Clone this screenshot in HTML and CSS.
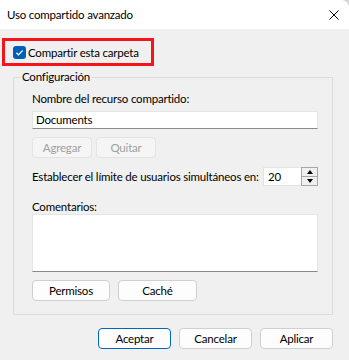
FILE: index.html
```html
<!DOCTYPE html>
<html lang="es">
<head>
<meta charset="utf-8">
<title>Uso compartido avanzado</title>
<link rel="stylesheet" href="styles.css">
</head>
<body>
<div class="titlebar">
  <span class="title">Uso compartido avanzado</span>
  <svg class="close" width="10" height="10" viewBox="0 0 10 10"><path d="M0.5 0.5 9.5 9.5M9.5 0.5 0.5 9.5" stroke="#000" stroke-width="1" fill="none"/></svg>
</div>
<div class="share">
  <svg class="check" width="13" height="13" viewBox="0 0 13 13"><rect width="13" height="13" rx="3" fill="#005fb8"/><path d="M3.4 6.8 5.5 8.8 9.6 4.5" fill="none" stroke="#fff" stroke-width="1.2"/></svg>
  <span>Compartir esta carpeta</span>
</div>
<fieldset class="group">
  <legend>Configuración</legend>
  <div class="group-body">
    <div class="label">Nombre del recurso compartido:</div>
    <div class="input">Documents</div>
    <div class="btn-row">
      <button class="btn w60" disabled>Agregar</button>
      <button class="btn w60" disabled>Quitar</button>
    </div>
    <div class="limit-row">
      <span>Establecer el límite de usuarios simultáneos en:</span>
      <div class="spin">
        <span class="spin-value">20</span>
        <span class="spin-btns">
          <span class="sb sb-up"><span class="tri-up"></span></span>
          <span class="sb"><span class="tri-down"></span></span>
        </span>
      </div>
    </div>
    <div class="label comments">Comentarios:</div>
    <div class="textarea"></div>
    <div class="btn-row gap8">
      <button class="btn w78">Permisos</button>
      <button class="btn w79">Caché</button>
    </div>
  </div>
</fieldset>
<div class="footer">
  <button class="btn fbtn default">Aceptar</button>
  <button class="btn fbtn">Cancelar</button>
  <button class="btn fbtn">Aplicar</button>
</div>
</body>
</html>
```
FILE: styles.css
```css
* { box-sizing: border-box; }
html { background: #d4d4d4; }
body {
  margin: 0;
  width: 349px;
  height: 360px;
  background: #f0f0f0;
  font-family: Lato, Roboto, "Noto Sans", sans-serif;
  font-size: 11.5px;
  letter-spacing: -0.2px;
  color: #000;
  border-top-right-radius: 8px;
  overflow: hidden;
  white-space: nowrap;
}
.titlebar {
  height: 29px;
  background: #fff;
  display: flex;
  align-items: center;
  padding-left: 7px;
}
.title { flex: 1; line-height: 16px; padding-top: 1px; }
.close { margin-right: 10px; }
.share {
  display: flex;
  align-items: center;
  gap: 2px;
  width: 152px;
  height: 28px;
  margin: 9px 0 0 2px;
  border: 3px solid #f5141a;
  padding-left: 8px;
}
.check { flex: none; }
.group {
  margin: 3px 16px 0 13px;
  padding: 0;
  border: 1px solid #dcdcdc;
  min-width: 0;
}
.group legend { margin-left: 6px; padding: 0 2px; line-height: 16px; }
.group-body { padding: 6px 14px 13px 18px; }
.label { line-height: 16px; }
.input {
  margin-top: 4px;
  height: 18px;
  background: #fff;
  border: 1px solid #e5e5e5;
  border-bottom-color: #8a8a8a;
  padding-left: 3px;
  line-height: 16px;
}
.btn-row { display: flex; gap: 4px; margin-top: 8px; }
.btn-row.gap8 { gap: 8px; }
.btn {
  font: inherit;
  letter-spacing: inherit;
  height: 21px;
  background: #fdfdfd;
  border: 1px solid #d0d0d0;
  border-radius: 4px;
  padding: 0;
  color: #000;
}
.btn:disabled { color: #a0a0a0; border-color: #e3e3e3; background: #f5f5f5; }
.w60 { width: 60px; }
.w78 { width: 78px; }
.w79 { width: 79px; }
.limit-row { display: flex; align-items: center; justify-content: space-between; margin-top: 9px; height: 19px; }
.spin {
  display: flex;
  width: 55px;
  height: 19px;
  background: #fff;
  border: 1px solid #e3e3e3;
}
.spin-value { flex: 1; padding-left: 4px; line-height: 17px; }
.spin-btns {
  width: 17px;
  display: flex;
  flex-direction: column;
  border: 1px solid #a8a8a8;
  margin: -1px -1px -1px 0;
}
.sb { flex: 1; display: flex; align-items: center; justify-content: center; background: #f0f0f0; }
.sb-up { border-bottom: 1px solid #a8a8a8; }
.tri-up { border-left: 3.5px solid transparent; border-right: 3.5px solid transparent; border-bottom: 4px solid #000; }
.tri-down { border-left: 3.5px solid transparent; border-right: 3.5px solid transparent; border-top: 4px solid #000; }
.label.comments { margin-top: 14px; line-height: 14px; }
.textarea {
  height: 58px;
  background: #fff;
  border: 1px solid #e5e5e5;
  border-bottom-color: #8a8a8a;
}
.footer { display: flex; justify-content: flex-end; gap: 8px; margin-top: 13px; padding-right: 16px; }
.fbtn { width: 73px; }
.default { border-color: #0067c0; }
```
